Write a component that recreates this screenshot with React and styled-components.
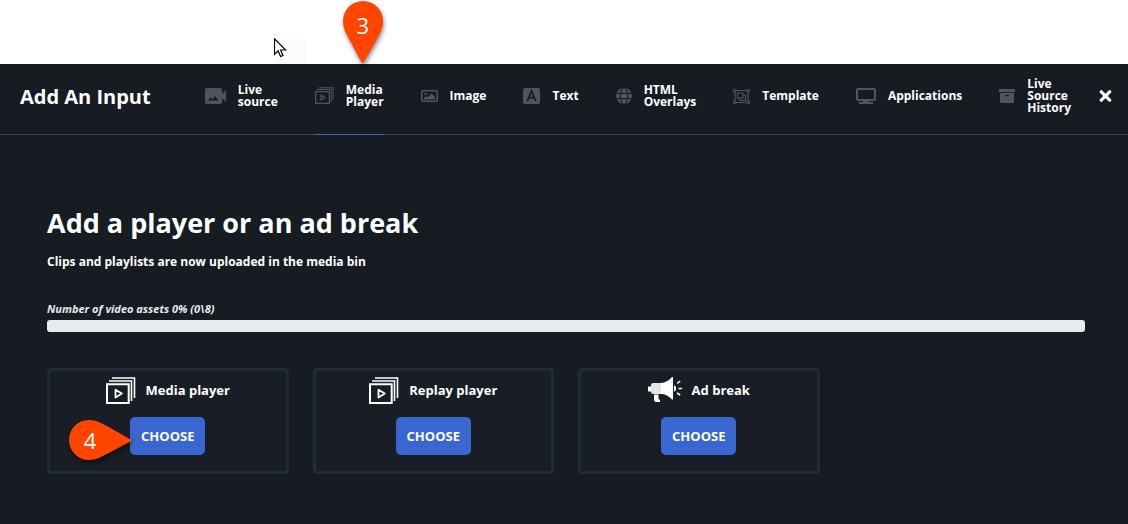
import React from "react";
import styled, { createGlobalStyle } from "styled-components";

const GlobalStyle = createGlobalStyle`
  *, *::before, *::after { box-sizing: border-box; }
  body {
    margin: 0;
    background: #171b22;
    color: #fff;
    font-family: "Open Sans", "Noto Sans", sans-serif;
  }
`;

const Page = styled.div`
  min-height: 100vh;
  background: #171b22;
`;

const TopStrip = styled.div`
  position: relative;
  height: 64px;
  background: #fff;
`;

const PointerPatch = styled.div`
  position: absolute;
  left: 274px;
  top: 38px;
  width: 32px;
  height: 26px;
  background: #fbfbfb;

  svg { display: block; }
`;

const Header = styled.header`
  display: flex;
  height: 71px;
  padding: 0 16px 0 20px;
  border-bottom: 1px solid #3c3f44;
`;

const Title = styled.h2`
  margin: 0 auto 0 0;
  padding-top: 19px;
  font-size: 20px;
  line-height: 28px;
  font-weight: 700;
  white-space: nowrap;
`;

const Tabs = styled.nav`
  display: flex;
  gap: 37px;
`;

const Tab = styled.a`
  position: relative;
  display: flex;
  align-items: center;
  gap: 12px;
  margin-bottom: -1px;
  padding-bottom: 6px;
  border-bottom: 1px solid ${(p) => (p.$active ? "#3a67cf" : "transparent")};
  color: #fff;
  font-size: 12px;
  line-height: 12px;
  font-weight: 700;
  white-space: pre-line;
  text-decoration: none;

  svg { flex: none; color: #50545d; }
`;

const CloseButton = styled.button`
  align-self: flex-start;
  display: flex;
  margin: 26px 0 0 28px;
  padding: 0;
  border: 0;
  background: none;
  color: #fff;
  cursor: pointer;
`;

const Content = styled.main`
  padding: 68px 43px 50px 47px;
`;

const Heading = styled.h1`
  margin: 0;
  font-size: 27px;
  line-height: 40px;
  font-weight: 700;
`;

const Lead = styled.p`
  margin: 9px 0 0;
  font-size: 12px;
  line-height: 20px;
  font-weight: 700;
`;

const Quota = styled.p`
  margin: 29px 0 0;
  color: #e8ebed;
  font-size: 11px;
  line-height: 16px;
  font-weight: 700;
  font-style: italic;
`;

const Progress = styled.div`
  height: 12px;
  margin-top: 3px;
  overflow: hidden;
  border-radius: 3px;
  background: #e8ecee;
`;

const ProgressFill = styled.div`
  height: 100%;
  background: #3a67cf;
`;

const Cards = styled.div`
  display: grid;
  grid-template-columns: repeat(4, 1fr);
  gap: 24px;
  margin-top: 36px;
`;

const Card = styled.section`
  display: flex;
  flex-direction: column;
  align-items: center;
  gap: 12px;
  padding: 4px 0 16px;
  border: 3px solid #222a35;
  border-radius: 4px;
  background: #191d25;
`;

const CardTitle = styled.h3`
  display: flex;
  align-items: center;
  gap: 10px;
  height: 30px;
  margin: 0;
  font-size: 13px;
  line-height: 20px;
  font-weight: 700;
  white-space: nowrap;
`;

const ButtonAnchor = styled.div`
  position: relative;
`;

const ChooseButton = styled.button`
  display: block;
  height: 38px;
  padding: 0 11px;
  border: 0;
  border-radius: 5px;
  background: #3a67cf;
  color: #fff;
  font-family: inherit;
  font-size: 13px;
  line-height: 20px;
  font-weight: 700;
  cursor: pointer;
`;

const TopPin = styled.div`
  position: absolute;
  left: 22px;
  top: -69px;
`;

const SidePin = styled.div`
  position: absolute;
  right: 100%;
  top: -3px;
  margin-right: -7px;
`;

const PinArt = styled.svg`
  display: block;
  && { color: #ff4500; }
  filter: drop-shadow(1px 3px 2px rgba(0, 0, 0, 0.45));
`;

const PinNumber = styled.span`
  position: absolute;
  left: 6px;
  top: ${(p) => (p.$low ? "10px" : "6px")};
  width: ${(p) => (p.$low ? "40px" : "42px")};
  color: #fff;
  font-size: 22px;
  font-weight: 400;
  line-height: 40px;
  text-align: center;
`;

function Cursor() {
  return (
    <svg width="13" height="20" viewBox="0 0 13 20" aria-hidden="true">
      <path d="M.5.8v15.7l3.6-3.6 2.5 5.6 2.4-1-2.4-5.5h5.1z" fill="#fff" stroke="#000" strokeWidth="1.2" />
    </svg>
  );
}

function CameraIcon() {
  return (
    <svg width="21" height="16" viewBox="0 0 21 16" fill="currentColor" aria-hidden="true">
      <path
        fillRule="evenodd"
        d="M2 0h13a2 2 0 0 1 2 2v4l4-4v12l-4-4v4a2 2 0 0 1-2 2H2a2 2 0 0 1-2-2V2a2 2 0 0 1 2-2zm1 12.500h10.500l-3.400-4.500-2.600 3.400-1.900-2.200z"
      />
    </svg>
  );
}

function PlayerIcon({ size = 30 }) {
  return (
    <svg width={size} height={size * 0.9} viewBox="0 0 30 27" fill="none" stroke="currentColor" aria-hidden="true">
      <path d="M6 1h22.500v20M3 4h22.500v20" strokeWidth="1.600" />
      <path d="M1 7.200h21.700v18.800H1z" strokeWidth="2" />
      <path d="M9.500 12.700v7.800l6.300-3.900z" strokeWidth="1.800" strokeLinejoin="round" />
    </svg>
  );
}

function ImageIcon() {
  return (
    <svg width="17" height="12" viewBox="0 0 17 12" aria-hidden="true">
      <rect x=".75" y=".75" width="15.500" height="10.500" rx="1" fill="none" stroke="currentColor" strokeWidth="1.500" />
      <circle cx="4.500" cy="4" r="1.200" fill="currentColor" />
      <path d="M3 9.500V8l2-2 1.500 1.500L10.500 3.500 14 7v2.500z" fill="currentColor" />
    </svg>
  );
}

function TextIcon() {
  return (
    <svg width="17" height="16" viewBox="0 0 17 16" aria-hidden="true">
      <rect width="17" height="16" rx="2" fill="currentColor" />
      <path d="M4.300 13 8.500 3l4.200 10M6 9.700h5" fill="none" stroke="#171b22" strokeWidth="1.800" />
    </svg>
  );
}

function GlobeIcon() {
  return (
    <svg width="16" height="16" viewBox="0 0 16 16" aria-hidden="true">
      <circle cx="8" cy="8" r="8" fill="currentColor" />
      <g fill="none" stroke="#171b22" strokeWidth="1">
        <ellipse cx="8" cy="8" rx="3.600" ry="8.500" />
        <path d="M0 5.300h16M0 10.700h16" />
      </g>
    </svg>
  );
}

function TemplateIcon() {
  return (
    <svg width="17" height="15" viewBox="0 0 17 15" fill="none" stroke="currentColor" aria-hidden="true">
      <path d="M2 2.500v10M15 2.500v10M3 1.500h11M3 13.500h11" strokeWidth="1.200" />
      <path d="M.5.5h2.500v2.500H.5zM14 .5h2.500v2.500H14zM.5 12h2.500v2.500H.5zM14 12h2.500v2.500H14z" />
      <path d="M4.500 4h5.500v5H4.500zM10 6h2.500v5.500H7V9" strokeWidth="1.200" />
    </svg>
  );
}

function ScreenIcon() {
  return (
    <svg width="20" height="16" viewBox="0 0 20 16" fill="none" stroke="currentColor" aria-hidden="true">
      <rect x="1" y="1" width="18" height="11" rx="1" strokeWidth="2" />
      <path d="M3 15h14M7 14h6" strokeWidth="2" />
    </svg>
  );
}

function ArchiveIcon() {
  return (
    <svg width="16" height="14" viewBox="0 0 16 14" fill="currentColor" aria-hidden="true">
      <path d="M0 0h16v3.200H0z" />
      <path fillRule="evenodd" d="M1 4h14v9a1 1 0 0 1-1 1H2a1 1 0 0 1-1-1zm5 2v1.200h4V6z" />
    </svg>
  );
}

function CloseIcon() {
  return (
    <svg width="13" height="12" viewBox="0 0 13 12" aria-hidden="true">
      <path d="M2.300 1.800l8.400 8.400M10.700 1.800l-8.400 8.400" stroke="currentColor" strokeWidth="3.200" strokeLinecap="round" />
    </svg>
  );
}

function MegaphoneIcon() {
  return (
    <svg width="34" height="26" viewBox="0 0 34 26" aria-hidden="true">
      <path d="M0 9.500h3v5H0z" fill="#fff" />
      <path d="M5 6h8v11H5a2 2 0 0 1-2-2V8a2 2 0 0 1 2-2z" fill="#e4e5e6" />
      <path d="M13 6c4 0 8-2.500 11-6h1v22.500h-1c-3-3.500-7-5.500-11-5.500z" fill="#fff" />
      <path d="M26 8l2 2v3l-2 2z" fill="#fff" />
      <path d="M6 17.500h4.500V22l1.500 1v2H7.500L6 23.500z" fill="#fff" />
      <path d="M29 6.500l3.200-2.300M30.500 11.500H34M29 16l3.200 2" fill="none" stroke="#fff" strokeWidth="1.500" />
    </svg>
  );
}

function DownPin({ number }) {
  return (
    <TopPin>
      <PinArt width="52" height="74" viewBox="-6 -6 52 74" fill="currentColor" aria-hidden="true">
        <path d="M20 0a20 20 0 0 1 20 20c0 7-3 12-6 18L20.500 61.500Q19.500 63 18.500 61.500L6 38C3 32 0 27 0 20A20 20 0 0 1 20 0z" />
      </PinArt>
      <PinNumber $low>{number}</PinNumber>
    </TopPin>
  );
}

function RightPin({ number }) {
  return (
    <SidePin>
      <PinArt width="74" height="52" viewBox="-6 -6 74 52" fill="currentColor" aria-hidden="true">
        <path d="M20 0c7 0 12 3 18 6l23.500 13.500q1.500 1 0 2L38 34c-6 3-11 6-18 6a20 20 0 0 1 0-40z" />
      </PinArt>
      <PinNumber>{number}</PinNumber>
    </SidePin>
  );
}

const tabs = [
  { label: "Live\nsource", icon: <CameraIcon /> },
  { label: "Media\nPlayer", icon: <PlayerIcon size={19} />, active: true, pin: 3 },
  { label: "Image", icon: <ImageIcon /> },
  { label: "Text", icon: <TextIcon /> },
  { label: "HTML\nOverlays", icon: <GlobeIcon /> },
  { label: "Template", icon: <TemplateIcon /> },
  { label: "Applications", icon: <ScreenIcon /> },
  { label: "Live\nSource\nHistory", icon: <ArchiveIcon /> },
];

const cards = [
  { label: "Media player", icon: <PlayerIcon />, pin: 4 },
  { label: "Replay player", icon: <PlayerIcon /> },
  { label: "Ad break", icon: <MegaphoneIcon /> },
];

export default function App() {
  const used = 0;
  const total = 8;
  const percent = (used / total) * 100;

  return (
    <Page>
      <GlobalStyle />
      <TopStrip>
        <PointerPatch>
          <Cursor />
        </PointerPatch>
      </TopStrip>
      <Header>
        <Title>Add An Input</Title>
        <Tabs>
          {tabs.map((tab) => (
            <Tab key={tab.label} href="#" $active={tab.active} aria-current={tab.active ? "page" : undefined}>
              {tab.icon}
              <span>{tab.label}</span>
              {tab.pin && <DownPin number={tab.pin} />}
            </Tab>
          ))}
        </Tabs>
        <CloseButton aria-label="Close">
          <CloseIcon />
        </CloseButton>
      </Header>
      <Content>
        <Heading>Add a player or an ad break</Heading>
        <Lead>Clips and playlists are now uploaded in the media bin</Lead>
        <Quota id="quota">{`Number of video assets ${percent}% (${used}\\${total})`}</Quota>
        <Progress role="progressbar" aria-labelledby="quota" aria-valuenow={percent} aria-valuemin={0} aria-valuemax={100}>
          <ProgressFill style={{ width: `${percent}%` }} />
        </Progress>
        <Cards>
          {cards.map((card) => (
            <Card key={card.label}>
              <CardTitle>
                {card.icon}
                {card.label}
              </CardTitle>
              <ButtonAnchor>
                <ChooseButton>CHOOSE</ChooseButton>
                {card.pin && <RightPin number={card.pin} />}
              </ButtonAnchor>
            </Card>
          ))}
        </Cards>
      </Content>
    </Page>
  );
}
